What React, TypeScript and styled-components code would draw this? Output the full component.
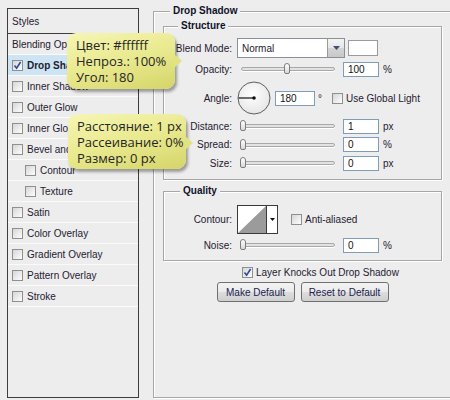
import React from "react";
import styled, { createGlobalStyle } from "styled-components";

const GlobalStyle = createGlobalStyle`
  html, body {
    margin: 0;
    padding: 0;
    background: #ededed;
    overflow: hidden;
  }
  body {
    font-family: "Liberation Sans", Arial, sans-serif;
    font-size: 10px;
    color: #1f2030;
  }
`;

const Page = styled.div`
  position: relative;
  width: 450px;
  height: 400px;
  display: flex;
  align-items: flex-start;
  overflow: hidden;
`;

/* ---------- left styles list ---------- */

const StylesPanel = styled.div`
  margin: 8px 0 0 7px;
  width: 132px;
  height: 390px;
  box-sizing: border-box;
  border: 1px solid #3d3d3d;
  display: flex;
  flex-direction: column;
  flex-shrink: 0;
`;

const PanelHeader = styled.div`
  height: 24px;
  border-bottom: 1px solid #3d3d3d;
  display: flex;
  align-items: center;
  padding-left: 4px;
`;

const StyleRow = styled.div<{ $active?: boolean; $indent?: number }>`
  height: 20px;
  border-bottom: 1px solid #fafafa;
  display: flex;
  align-items: center;
  padding-left: ${({ $indent }) => $indent ?? 4}px;
  background: ${({ $active }) => ($active ? "#cde4f5" : "transparent")};
  font-weight: ${({ $active }) => ($active ? "bold" : "normal")};
  white-space: nowrap;
  overflow: hidden;
`;

const Box = styled.span<{ $gap?: number }>`
  width: 11px;
  height: 11px;
  box-sizing: border-box;
  border: 1px solid #8e8f8f;
  background: linear-gradient(135deg, #d6d6d6, #fdfdfd);
  margin-right: ${({ $gap }) => $gap ?? 4}px;
  display: inline-flex;
  align-items: center;
  justify-content: center;
  flex-shrink: 0;
`;

const CheckBox = ({ checked, gap }: { checked?: boolean; gap?: number }) => (
  <Box $gap={gap}>
    {checked && (
      <svg width="9" height="9" viewBox="0 0 9 9">
        <path d="M1.5 4.5 L3.6 7.2 L7.6 1" fill="none" stroke="#2b4aa0" strokeWidth="1.6" />
      </svg>
    )}
  </Box>
);

/* ---------- right settings ---------- */

const GroupBox = styled.div<{ $width: number; $height?: number; $top: number; $pad?: number }>`
  box-sizing: border-box;
  width: ${({ $width }) => $width}px;
  ${({ $height }) => ($height ? `height: ${$height}px;` : "")}
  margin-top: ${({ $top }) => $top}px;
  padding-left: ${({ $pad }) => $pad ?? 0}px;
  border: 1px solid #a7a7a7;
  box-shadow: inset 1px 1px 0 #fff, 1px 1px 0 #fff;
  flex-shrink: 0;
`;

const GroupTitle = styled.div<{ $indent: number }>`
  display: table;
  margin: -8px 0 0 ${({ $indent }) => $indent}px;
  padding: 0 3px;
  line-height: 14px;
  background: #ededed;
  font-weight: bold;
  color: #10122a;
`;

const RightColumn = styled.div`
  margin-left: 14px;
`;

const Rows = styled.div<{ $top: number; $bottom: number }>`
  padding: ${({ $top }) => $top}px 0 ${({ $bottom }) => $bottom}px;
`;

const FormRow = styled.div<{ $height: number; $top?: number }>`
  height: ${({ $height }) => $height}px;
  margin-top: ${({ $top }) => $top ?? 0}px;
  display: flex;
  align-items: center;
  white-space: nowrap;
`;

const Label = styled.span`
  width: 68px;
  margin-right: 5px;
  text-align: right;
  flex-shrink: 0;
`;

const Select = styled.div`
  width: 108px;
  height: 20px;
  box-sizing: border-box;
  border: 1px solid #8a8f99;
  background: #fff;
  display: flex;
  align-items: center;
  padding-left: 4px;
`;

const SelectText = styled.span`
  flex: 1;
`;

const DropButton = styled.span`
  width: 17px;
  height: 18px;
  box-sizing: border-box;
  border-left: 1px solid #9a9a9a;
  background: linear-gradient(#f4f4f4, #e6e6e6 50%, #d4d4d4 51%, #c8c8c8);
  display: flex;
  align-items: center;
  justify-content: center;
`;

const Swatch = styled.span`
  width: 30px;
  height: 16px;
  box-sizing: border-box;
  margin-left: 3px;
  border: 1px solid #9b9b9b;
  background: #fff;
`;

const SliderWrap = styled.div`
  position: relative;
  width: 100px;
  height: 14px;
  display: flex;
  align-items: center;
`;

const Track = styled.div`
  margin-left: 4px;
  width: 94px;
  height: 4px;
  box-sizing: border-box;
  border: 1px solid #a9a9a9;
  border-radius: 2px;
  background: #e2e2e2;
  box-shadow: 0 1px 0 #fff;
`;

const Thumb = styled.div`
  position: absolute;
  top: 1px;
  width: 6px;
  height: 11px;
  box-sizing: border-box;
  border: 1px solid #7d7d7d;
  border-radius: 3px 3px 2px 2px;
  background: linear-gradient(#ffffff, #d8d8d8);
`;

const Input = styled.div<{ $width?: number; $left?: number }>`
  width: ${({ $width }) => $width ?? 36}px;
  height: 15px;
  box-sizing: border-box;
  margin-left: ${({ $left }) => $left ?? 6}px;
  border: 1px solid #7f9db9;
  background: #fff;
  padding-left: 4px;
  line-height: 13px;
  color: #111;
`;

const Unit = styled.span<{ $left?: number }>`
  margin-left: ${({ $left }) => $left ?? 4}px;
`;

const Dial = styled.svg`
  flex-shrink: 0;
`;

const ContourPicker = styled.div`
  display: flex;
  height: 29px;
  box-sizing: border-box;
  border: 1px solid #3a3a3a;
  background: #fff;
`;

const ContourArrow = styled.span`
  width: 10px;
  border-left: 1px solid #3a3a3a;
  display: flex;
  align-items: center;
  justify-content: center;
`;

const Footer = styled.div`
  width: 279px;
`;

const CheckRow = styled.div`
  height: 14px;
  margin-top: 4px;
  padding-left: 79px;
  display: flex;
  align-items: center;
  white-space: nowrap;
`;

const ButtonRow = styled.div`
  margin-top: 3px;
  display: flex;
  justify-content: center;
  gap: 6px;
`;

const Button = styled.button<{ $width: number }>`
  width: ${({ $width }) => $width}px;
  height: 20px;
  padding: 0;
  border: 1px solid #707070;
  border-radius: 3px;
  background: linear-gradient(#f3f3f3, #ebebeb 50%, #dddddd 51%, #cfcfcf);
  font-family: "Liberation Sans", Arial, sans-serif;
  font-size: 10px;
  color: #1b2250;
`;

/* ---------- tooltips ---------- */

const Bubble = styled.div<{ $x: number; $y: number; $w: number; $h: number; $tip: number }>`
  position: absolute;
  left: ${({ $x }) => $x}px;
  top: ${({ $y }) => $y}px;
  width: ${({ $w }) => $w}px;
  height: ${({ $h }) => $h}px;
  box-sizing: border-box;
  padding: 4px 0 0 9px;
  border-radius: 9px;
  background: linear-gradient(165deg, #f6f6b4 0%, #e9e98f 50%, #d5d569 100%);
  box-shadow: 2px 3px 3px rgba(0, 0, 0, 0.35);
  font-family: "Open Sans", "Noto Sans", sans-serif;
  font-size: 13px;
  line-height: 16px;
  color: #262626;
  white-space: nowrap;

  &::after {
    content: "";
    position: absolute;
    right: -7px;
    top: ${({ $tip }) => $tip}px;
    border-top: 7px solid transparent;
    border-bottom: 7px solid transparent;
    border-left: 8px solid #e2e282;
  }
`;

const styleItems: { name: string; indent?: number }[] = [
  { name: "Inner Shadow" },
  { name: "Outer Glow" },
  { name: "Inner Glow" },
  { name: "Bevel and Emboss" },
  { name: "Contour", indent: 17 },
  { name: "Texture", indent: 17 },
  { name: "Satin" },
  { name: "Color Overlay" },
  { name: "Gradient Overlay" },
  { name: "Pattern Overlay" },
  { name: "Stroke" },
];

const SliderField = ({
  label,
  pos,
  value,
  unit,
  height,
  top,
}: {
  label: string;
  pos: number;
  value: string;
  unit: string;
  height: number;
  top?: number;
}) => (
  <FormRow $height={height} $top={top}>
    <Label>{label}</Label>
    <SliderWrap>
      <Track />
      <Thumb style={{ left: 4 + pos - 3 }} />
    </SliderWrap>
    <Input>{value}</Input>
    <Unit>{unit}</Unit>
  </FormRow>
);

const App = () => {
  return (
    <Page>
      <GlobalStyle />
      <StylesPanel>
        <PanelHeader>Styles</PanelHeader>
        <StyleRow>Blending Options: Default</StyleRow>
        <StyleRow $active>
          <CheckBox checked />
          Drop Shadow
        </StyleRow>
        {styleItems.map((item) => (
          <StyleRow key={item.name} $indent={item.indent}>
            <CheckBox />
            {item.name}
          </StyleRow>
        ))}
      </StylesPanel>

      <RightColumn>
        <GroupBox $width={310} $height={387} $top={11} $pad={9}>
          <GroupTitle $indent={7}>Drop Shadow</GroupTitle>

          <GroupBox $width={279} $top={8}>
            <GroupTitle $indent={14}>Structure</GroupTitle>
            <Rows $top={5} $bottom={7}>
              <FormRow $height={20}>
                <Label>Blend Mode:</Label>
                <Select>
                  <SelectText>Normal</SelectText>
                  <DropButton>
                    <svg width="7" height="4" viewBox="0 0 7 4">
                      <path d="M0 0 H7 L3.5 4 Z" fill="#3f4f78" />
                    </svg>
                  </DropButton>
                </Select>
                <Swatch />
              </FormRow>
              <SliderField label="Opacity:" pos={46} value="100" unit="%" height={20} top={1} />
              <FormRow $height={38}>
                <Label>Angle:</Label>
                <Dial width="34" height="34" viewBox="0 0 34 34">
                  <defs>
                    <radialGradient id="dialFill" cx="45%" cy="40%" r="65%">
                      <stop offset="0%" stopColor="#ffffff" />
                      <stop offset="100%" stopColor="#e4e4e4" />
                    </radialGradient>
                  </defs>
                  <circle cx="17" cy="17" r="16" fill="url(#dialFill)" stroke="#5e5e5e" strokeWidth="1" />
                  <line x1="1.5" y1="17" x2="17" y2="17" stroke="#111" strokeWidth="1.2" />
                  <circle cx="17" cy="17" r="1.8" fill="#111" />
                </Dial>
                <Input $width={40} $left={4}>180</Input>
                <Unit $left={3}>°</Unit>
                <span style={{ width: 10 }} />
                <CheckBox gap={3} />
                Use Global Light
              </FormRow>
              <SliderField label="Distance:" pos={2} value="1" unit="px" height={18} />
              <SliderField label="Spread:" pos={2} value="0" unit="%" height={19} />
              <SliderField label="Size:" pos={2} value="0" unit="px" height={18} />
            </Rows>
          </GroupBox>

          <GroupBox $width={279} $top={11}>
            <GroupTitle $indent={16}>Quality</GroupTitle>
            <Rows $top={7} $bottom={6}>
              <FormRow $height={29}>
                <Label>Contour:</Label>
                <ContourPicker>
                  <svg width="28" height="27" viewBox="0 0 28 27">
                    <polygon points="0,27 28,0 28,27" fill="#9b9b9b" />
                  </svg>
                  <ContourArrow>
                    <svg width="5" height="3" viewBox="0 0 5 3">
                      <path d="M0 0 H5 L2.5 3 Z" fill="#111" />
                    </svg>
                  </ContourArrow>
                </ContourPicker>
                <span style={{ width: 13 }} />
                <CheckBox gap={3} />
                Anti-aliased
              </FormRow>
              <SliderField label="Noise:" pos={2} value="0" unit="%" height={18} top={2} />
            </Rows>
          </GroupBox>

          <Footer>
            <CheckRow>
              <CheckBox checked gap={3} />
              Layer Knocks Out Drop Shadow
            </CheckRow>
            <ButtonRow>
              <Button $width={78}>Make Default</Button>
              <Button $width={88}>Reset to Default</Button>
            </ButtonRow>
          </Footer>
        </GroupBox>
      </RightColumn>

      <Bubble $x={67} $y={33} $w={108} $h={56} $tip={21}>
        Цвет: #ffffff
        <br />
        Непроз.: 100%
        <br />
        Угол: 180
      </Bubble>
      <Bubble $x={68} $y={114} $w={118} $h={55} $tip={22}>
        Расстояние: 1 px
        <br />
        Рассеивание: 0%
        <br />
        Размер: 0 px
      </Bubble>
    </Page>
  );
};

export default App;
